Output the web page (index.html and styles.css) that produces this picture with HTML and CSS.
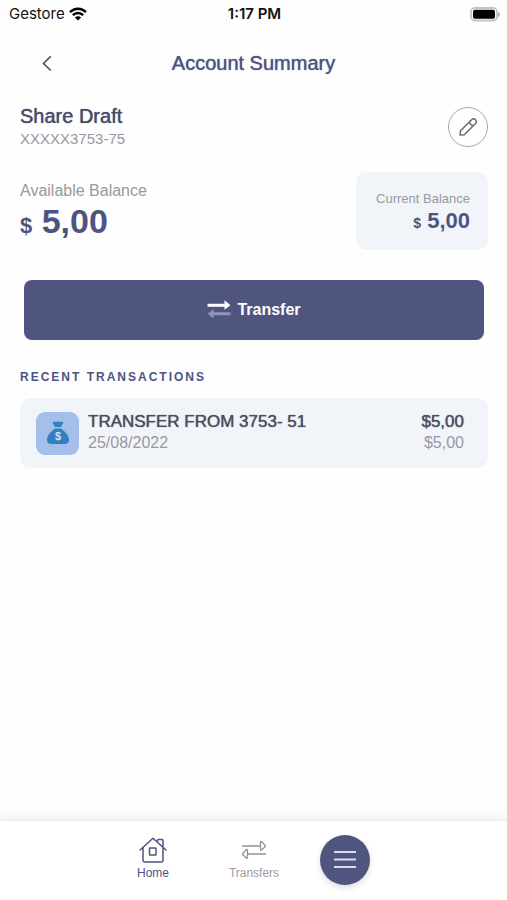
FILE: index.html
```html
<!DOCTYPE html>
<html lang="en">
<head>
<meta charset="utf-8">
<meta name="viewport" content="width=device-width, initial-scale=1">
<title>Account Summary</title>
<link rel="stylesheet" href="styles.css">
</head>
<body>
<div class="status">
  <div class="carrier">
    <span>Gestore</span>
    <svg width="18" height="14" viewBox="0 0 18 14" fill="none" stroke="#000" stroke-width="2.4"><path d="M1 5.2C5.6.6 12.4.6 17 5.2M3.8 8.2c3-2.9 7.4-2.9 10.4 0"/><path d="M9 13.6 5.9 10.4c1.8-1.6 4.4-1.6 6.2 0z" fill="#000" stroke="none"/></svg>
  </div>
  <time class="clock">1:17 PM</time>
  <svg class="battery" width="31" height="15" viewBox="0 0 31 15"><rect x="2" y="1" width="26" height="12.500" rx="4" fill="#fff" stroke="#c4c4c4" stroke-width="1.800"/><rect x="4" y="2.800" width="22" height="9" rx="2"/><path d="M29 5c2.500.8 2.500 4.200 0 5z" fill="#aaa"/></svg>
</div>
<header class="topbar">
  <button class="back" aria-label="Back"><svg width="12" height="18" viewBox="0 0 12 18" fill="none" stroke="#4c4c50" stroke-width="1.600"><path d="M9.800 2.200 2.500 9.500l7.300 7"/></svg></button>
  <h1>Account Summary</h1>
</header>
<main>
  <section class="account">
    <div>
      <h2>Share Draft</h2>
      <p class="number">XXXXX3753-75</p>
    </div>
    <button class="edit" aria-label="Edit account"><svg width="20" height="20" viewBox="0 0 20 20" fill="none" stroke="#66666c" stroke-width="1.400" stroke-linejoin="round"><path d="M2 18 2.500 13.800 13.600 2.700a2.700 2.700 0 0 1 3.900 3.900L6.300 17.800zM12 4.300a3 3 0 0 0 3.900 3.900"/></svg></button>
  </section>
  <section class="balances">
    <div class="available">
      <p class="label">Available Balance</p>
      <p class="amount"><small>$</small> 5,00</p>
    </div>
    <div class="current">
      <p class="label">Current Balance</p>
      <p class="amount"><small>$</small> 5,00</p>
    </div>
  </section>
  <button class="transfer">
    <svg width="24" height="20" viewBox="0 0 24 20"><path d="M.5 3.700h17V.3L23.500 5.200l-6 4.600V6.700H.5z" fill="#fff"/><path d="M23.500 12.300h-17V9.200L.5 13.800l6 4.700v-3.300h17z" fill="#8f95b9"/></svg>
    <span>Transfer</span>
  </button>
  <section>
    <h3>RECENT TRANSACTIONS</h3>
    <ul class="transactions">
      <li>
        <span class="tile"><svg width="24" height="24" viewBox="0 0 24 24" fill="#347fc0"><path d="M6.500 1.300 8 .7h8l1.500.6L15 6H9zM9 7.500h6c2.500 2 8 6.200 8 11.200 0 3-1.700 4.300-4.500 4.300h-13C2.700 23 1 21.700 1 18.700c0-5 5.500-9.200 8-11.200z"/><text x="12" y="19" text-anchor="middle" class="coin">$</text></svg></span>
        <div class="detail"><p class="primary">TRANSFER FROM 3753- 51</p><p class="secondary">25/08/2022</p></div>
        <div class="value"><p class="primary">$5,00</p><p class="secondary">$5,00</p></div>
      </li>
    </ul>
  </section>
</main>
<nav>
  <a href="#home" class="tab active">
    <svg width="28" height="26" viewBox="0 0 28 26" fill="none" stroke="#4e5480" stroke-width="1.500" stroke-linejoin="round" stroke-linecap="round"><path d="M1 13 14 1.200 27 13M4 10.500V23q0 2 2 2h16q2 0 2-2V10.500M18.500 5V3.500q0-1 1-1h3.500q1 0 1 1v7"/><rect x="10.500" y="11" width="6.500" height="7" rx=".5"/></svg>
    <span>Home</span>
  </a>
  <a href="#transfers" class="tab">
    <svg width="28" height="26" viewBox="0 0 28 26" fill="none" stroke="#929296" stroke-width="1.300" stroke-linejoin="round"><path d="M2 9h18.500M26 17H7.500M20.500 5.500q0-1.500 1.200-.7L25 8.200q.8.800 0 1.600l-3.300 3.200q-1.200.8-1.200-.7zM7.500 13.500q0-1.500-1.200-.7L3 16.200q-.8.800 0 1.600L6.300 21q1.200.8 1.200-.7z"/></svg>
    <span>Transfers</span>
  </a>
  <button class="menu" aria-label="Menu"><svg width="22" height="20" viewBox="0 0 22 20" stroke="#d7def2" stroke-width="2"><path d="M0 2h22M0 9.500h22M0 17h22"/></svg></button>
</nav>
</body>
</html>
```
FILE: styles.css
```css
* { box-sizing: border-box; }
body {
  margin: 0;
  min-height: 100vh;
  display: flex;
  flex-direction: column;
  background: #fefefe;
  color: #4e5480;
  font-family: "Liberation Sans", Arial, sans-serif;
}
h1, h2, h3, p, ul { margin: 0; padding: 0; font-weight: 400; }
button { border: 0; padding: 0; font: inherit; cursor: pointer; }
svg { display: block; }
.status {
  display: grid;
  grid-template-columns: 1fr auto 1fr;
  align-items: center;
  height: 28px;
  padding: 0 7px 0 9px;
  color: #111;
  font: 15px/20px Inter, sans-serif;
}
.carrier { display: flex; align-items: center; gap: 4px; }
.clock { font-weight: 600; }
.battery { justify-self: end; }
.topbar {
  display: grid;
  grid-template-columns: 54px 1fr 54px;
  align-items: center;
  height: 70px;
  padding: 0 20px;
}
.back { display: grid; place-items: center; height: 40px; background: none; }
h1 { font-size: 20px; line-height: 24px; text-align: center; text-shadow: 0 0 1px currentColor; }
main { flex: 1; padding: 6px 19px 20px 20px; }
.account { display: flex; justify-content: space-between; align-items: center; }
h2 { font-size: 20px; line-height: 24px; color: #494a68; text-shadow: 0 0 1px currentColor; }
.number, .label, .secondary { color: #98989f; font-size: 16px; line-height: 22px; }
.number { font-size: 15px; }
.edit {
  display: grid;
  place-items: center;
  width: 40px;
  height: 40px;
  border: 1px solid #aaaaad;
  border-radius: 50%;
  background: #fefefe;
}
.balances { display: flex; justify-content: space-between; align-items: flex-start; margin-top: 22px; }
.available { padding-top: 8px; }
.amount { font-size: 34px; line-height: 38px; font-weight: 700; }
.amount small { font-size: 22px; }
.current { min-width: 132px; padding: 16px 18px; border-radius: 10px; background: #f1f5f9; text-align: right; }
.current .label { font-size: 13px; line-height: 22px; }
.current .amount { font-size: 22px; line-height: 22px; }
.current small { font-size: 14px; }
.transfer {
  display: flex;
  align-items: center;
  justify-content: center;
  gap: 6px;
  width: calc(100% - 8px);
  height: 60px;
  margin: 30px 4px 26px;
  border-radius: 8px;
  background: #4f557f;
  color: #fff;
  font-size: 16px;
  font-weight: 700;
}
h3 { font-size: 12px; line-height: 22px; font-weight: 700; letter-spacing: 2px; }
.transactions { list-style: none; margin-top: 10px; }
.transactions li {
  display: flex;
  align-items: center;
  gap: 9px;
  height: 70px;
  padding: 0 24px 0 16px;
  border-radius: 10px;
  background: #f1f5f9;
}
.tile {
  display: grid;
  place-items: center;
  width: 43px;
  height: 43px;
  border-radius: 9px;
  background: #a3bfea;
}
.coin { fill: #d3e3f5; font-size: 11px; font-weight: 700; }
.detail { flex: 1; }
.primary { color: #4b4c5c; font-size: 17px; line-height: 20px; text-shadow: 0 0 1px currentColor; }
.value { text-align: right; }
nav {
  display: flex;
  justify-content: center;
  align-items: flex-start;
  height: 80px;
  padding-top: 14px;
  padding-right: 20px;
  border-top: 1px solid #eeeeee;
  background: #fff;
  box-shadow: 0 -1px 10px #e9e9e9;
}
.tab {
  display: flex;
  flex-direction: column;
  align-items: center;
  gap: 2px;
  width: 101px;
  padding-top: 2px;
  color: #9c9ca0;
  font-size: 12px;
  line-height: 16px;
  text-decoration: none;
}
.active { color: #4e5480; }
.menu {
  display: grid;
  place-items: center;
  width: 50px;
  height: 50px;
  margin: 0 15px;
  border-radius: 50%;
  background: #4f557f;
  box-shadow: 0 3px 6px #dddddd;
}
```
